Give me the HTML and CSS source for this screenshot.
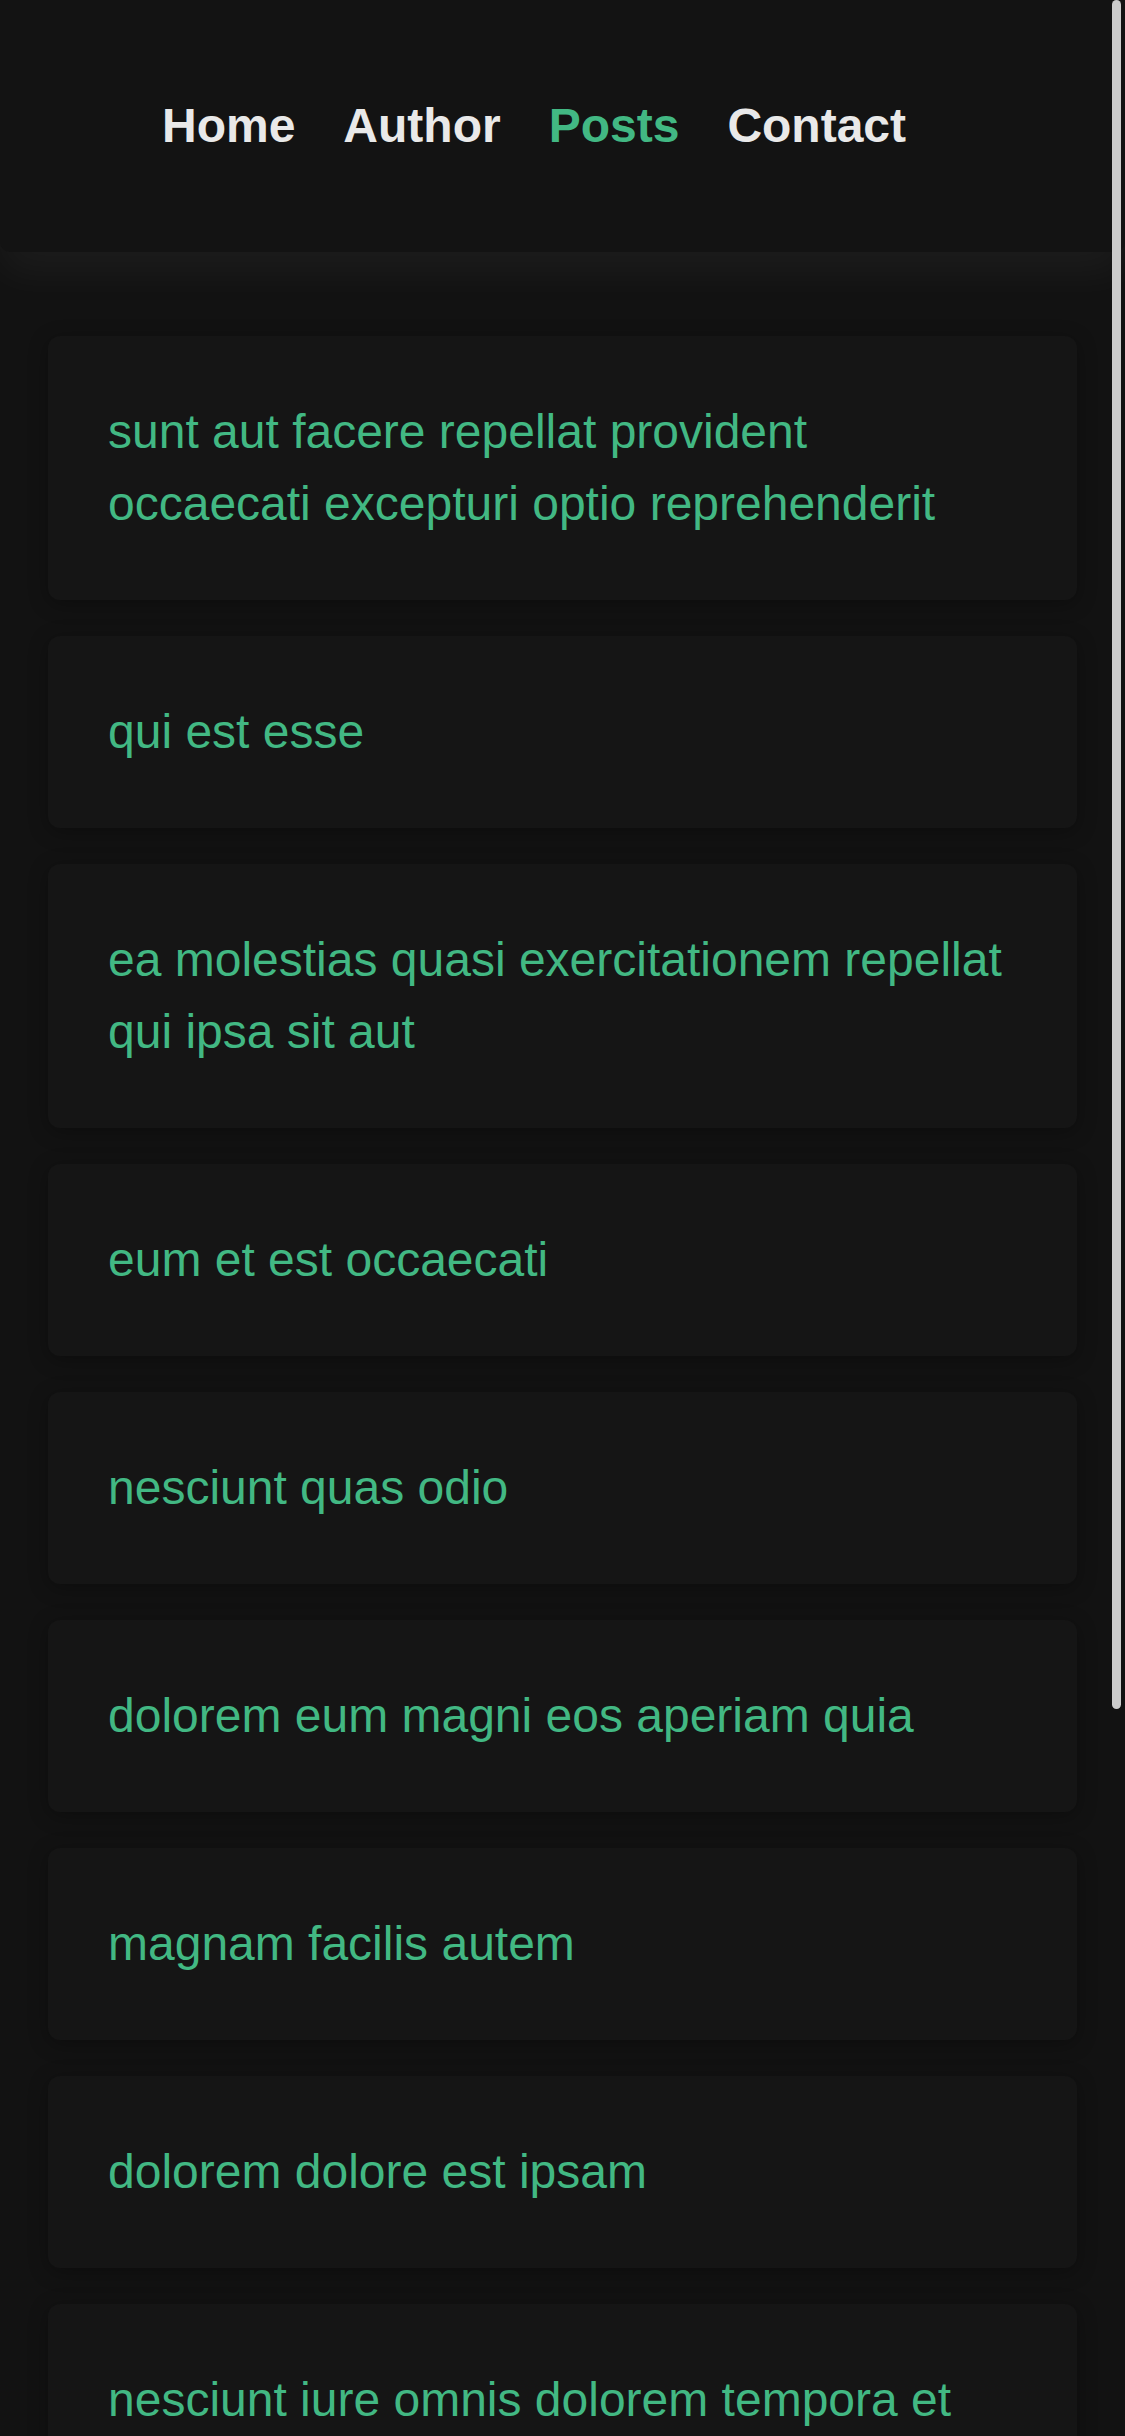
FILE: index.html
```html
<!DOCTYPE html>
<html lang="en">
<head>
<meta charset="utf-8">
<title>Posts</title>
<link rel="stylesheet" href="styles.css">
</head>
<body>
<header class="site-header">
  <nav class="nav">
    <a class="nav-link" href="#">Home</a>
    <a class="nav-link" href="#">Author</a>
    <a class="nav-link is-active" href="#">Posts</a>
    <a class="nav-link" href="#">Contact</a>
  </nav>
</header>
<main class="posts">
  <article class="post-card"><h2 class="post-title">sunt aut facere repellat provident occaecati excepturi optio reprehenderit</h2></article>
  <article class="post-card"><h2 class="post-title">qui est esse</h2></article>
  <article class="post-card"><h2 class="post-title">ea molestias quasi exercitationem repellat qui ipsa sit aut</h2></article>
  <article class="post-card"><h2 class="post-title">eum et est occaecati</h2></article>
  <article class="post-card"><h2 class="post-title">nesciunt quas odio</h2></article>
  <article class="post-card"><h2 class="post-title">dolorem eum magni eos aperiam quia</h2></article>
  <article class="post-card"><h2 class="post-title">magnam facilis autem</h2></article>
  <article class="post-card"><h2 class="post-title">dolorem dolore est ipsam</h2></article>
  <article class="post-card"><h2 class="post-title">nesciunt iure omnis dolorem tempora et accusantium</h2></article>
  <article class="post-card"><h2 class="post-title">optio molestias id quia eum</h2></article>
  <article class="post-card"><h2 class="post-title">et ea vero quia laudantium autem</h2></article>
  <article class="post-card"><h2 class="post-title">in quibusdam tempore odit est dolorem</h2></article>
</main>
<div class="scroll-thumb" aria-hidden="true"></div>
</body>
</html>
```

FILE: styles.css
```css
html {
  overflow: hidden;
  background: #121212;
}

body {
  margin: 0;
  background: #121212;
  font-family: "Liberation Sans", Arial, sans-serif;
  color: #e9e9e9;
}

.site-header {
  height: 252px;
  display: flex;
  align-items: center;
  padding-left: 162px;
  background: #131313;
  border-radius: 0 0 10px 10px;
  box-shadow: 0 22px 40px rgba(255, 255, 255, 0.045);
  position: relative;
  z-index: 1;
}

.nav {
  display: flex;
  gap: 48px;
}

.nav-link {
  font-size: 48px;
  font-weight: 700;
  line-height: 1.15;
  color: #e9e9e9;
  text-decoration: none;
}

.nav-link.is-active {
  color: #42b883;
}

.posts {
  display: flex;
  flex-direction: column;
  gap: 36px;
  padding: 84px 48px 48px;
}

.post-card {
  background: #151515;
  border-radius: 12px;
  padding: 60px;
  box-shadow: 0 4px 20px rgba(0, 0, 0, 0.3);
}

.post-title {
  margin: 0;
  font-size: 48px;
  font-weight: 400;
  line-height: 72px;
  color: #42b883;
}

.scroll-thumb {
  position: fixed;
  top: 0;
  right: 4px;
  width: 9px;
  height: 1709px;
  border-radius: 5px;
  background: #cbcbcb;
  z-index: 5;
}
```
